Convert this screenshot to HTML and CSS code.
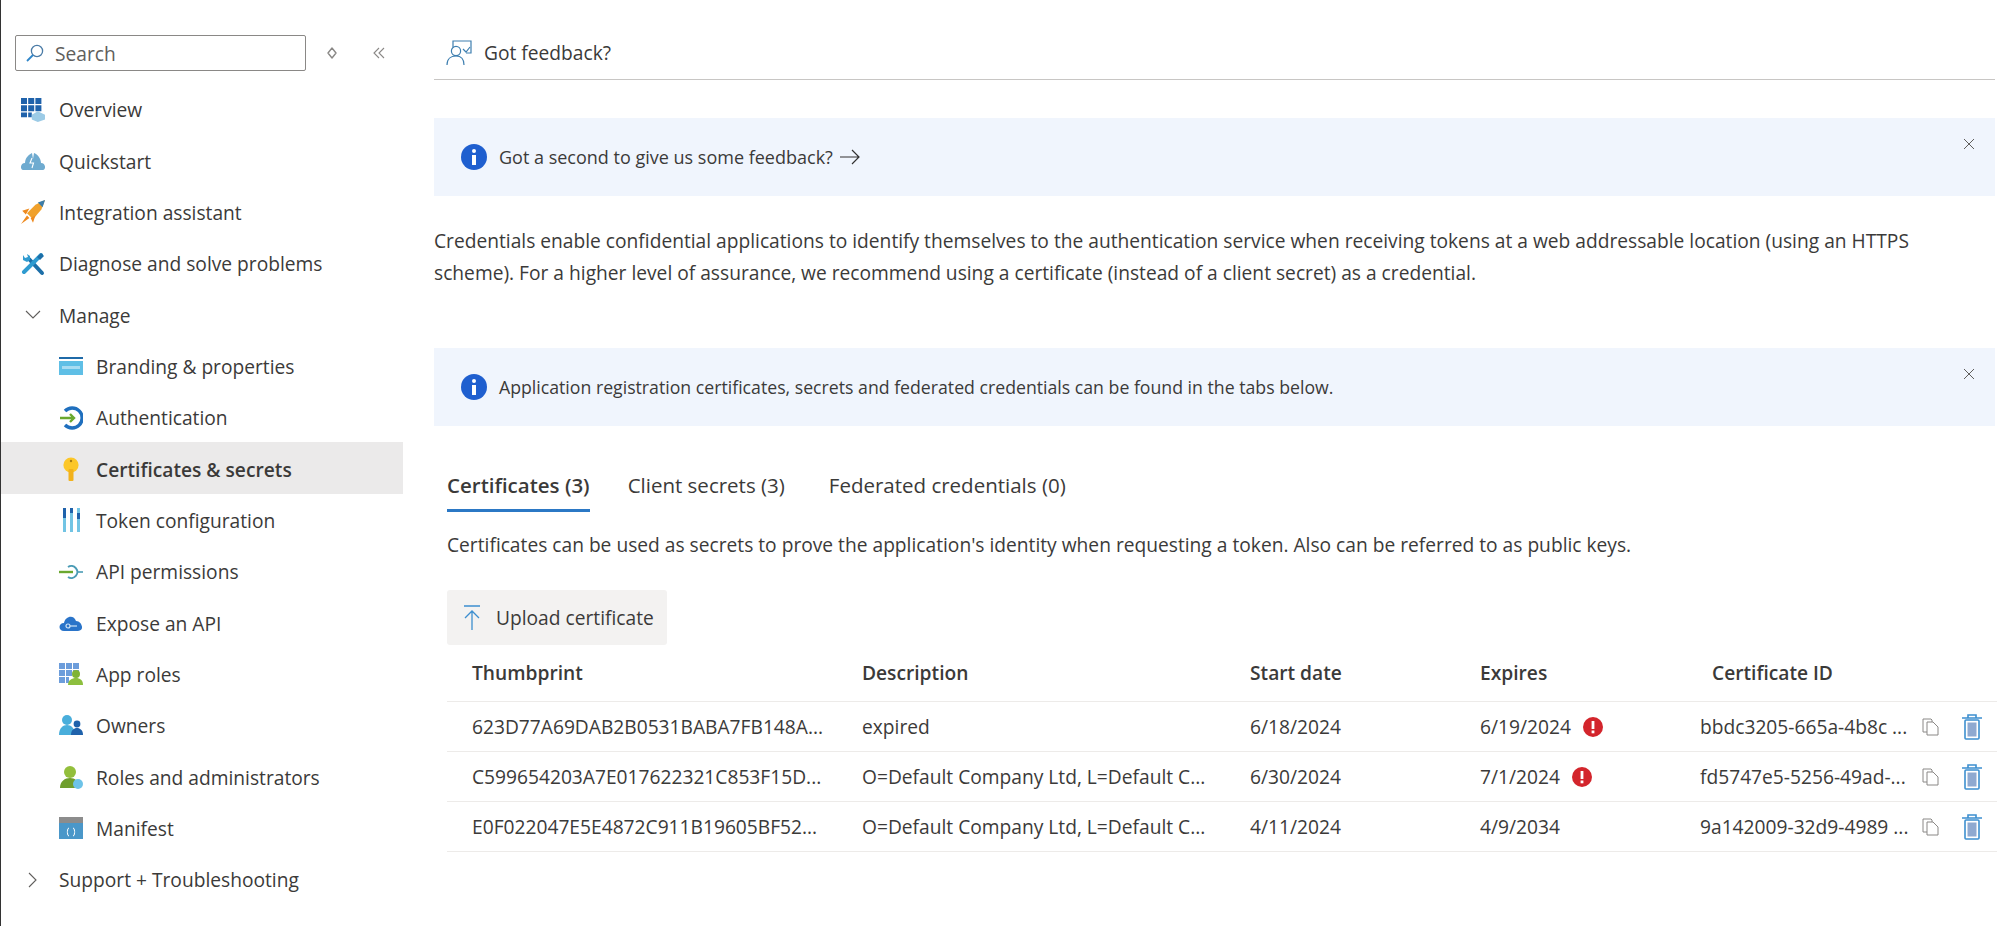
FILE: index.html
```html
<!DOCTYPE html>
<html lang="en">
<head>
  <meta charset="UTF-8">
  <title>Certificates &amp; secrets</title>
  <link rel="stylesheet" href="styles.css">
</head>
<body>
  <div class="page">
    <nav class="sidebar">
      <div class="search-row">
        <div class="search-box">
          <svg class="search-icon" viewBox="0 0 20 20"><circle cx="12" cy="8" r="5.6" fill="none" stroke="#4a7ba6" stroke-width="1.3"/><path d="M8 12L2 18" stroke="#2f86c9" stroke-width="1.8"/></svg>
          <span>Search</span>
        </div>
        <svg class="tool-icon" viewBox="0 0 12 14"><path d="M6 2L10 7L6 12L2 7Z" fill="none" stroke="#8a8886" stroke-width="1.4" stroke-linejoin="round"/></svg>
        <svg class="tool-icon collapse" viewBox="0 0 14 14"><path d="M7 2L2 7L7 12M12 2L7 7L12 12" fill="none" stroke="#8a8886" stroke-width="1.1"/></svg>
      </div>

      <a class="nav-item">
        <svg class="nav-icon" viewBox="0 0 20 20"><path d="M0 0H5V5H0ZM6 0H11V5H6ZM12 0H17V5H12ZM0 6H5V11H0ZM6 6H11V11H6ZM12 6H17V11H12ZM0 12H5V16H0ZM6 12H9V16H6Z" fill="#1f62ab"/><path d="M14 11L20 14V18L14 20L9 18V14Z" fill="#9ccbe6"/></svg>
        Overview
      </a>
      <a class="nav-item">
        <svg class="nav-icon" viewBox="0 0 24 24"><path d="M2 21C-1 21 -1 14 4 14C4 8 9 5 11 4L12 10L13 4C16 5 20 9 20 14C25 14 25 21 22 21Z" fill="#6fabd0"/><path d="M11 9L9 14H12.5L11 19" fill="none" stroke="#fff" stroke-width="1.1"/></svg>
        Quickstart
      </a>
      <a class="nav-item">
        <svg class="nav-icon" viewBox="0 0 20 20"><path d="M20 0L17 8L10 16L5 11L12 4Z" fill="#f0a12c"/><path d="M20 0L14 2L18 6Z" fill="#3c7da8"/><path d="M7 7L1 9L4 12ZM12 13L10 19L8 15ZM5 13L7 15L0 20Z" fill="#ee8a1f"/></svg>
        Integration assistant
      </a>
      <a class="nav-item">
        <svg class="nav-icon" viewBox="0 0 24 24"><path d="M8 7L21 21" stroke="#1d6fa8" stroke-width="4" stroke-linecap="round"/><path d="M20 3L3 20" stroke="#2f9bd0" stroke-width="4" stroke-linecap="round"/><path d="M20 1L23 4L19 8L16 5Z" fill="#1d6fa8"/><path d="M2 3L4 6L7 5L6 2L9 4L9 8L6 10L2 8Z" fill="#2f9bd0"/></svg>
        Diagnose and solve problems
      </a>
      <a class="nav-item">
        <svg class="nav-icon chevron" viewBox="0 0 16 16"><path d="M1 4L8 11L15 4" fill="none" stroke="#605e5c" stroke-width="1.1"/></svg>
        Manage
      </a>

      <a class="nav-item sub">
        <svg class="nav-icon" viewBox="0 0 24 20"><rect y="1" width="24" height="18" fill="#5fbfe6"/><rect y="1" width="24" height="2" fill="#1f6aa8"/><rect y="3" width="24" height="2" fill="#fff"/><rect x="3" y="10" width="18" height="3" fill="#a8dcf2"/></svg>
        Branding &amp; properties
      </a>
      <a class="nav-item sub">
        <svg class="nav-icon" viewBox="0 0 24 24"><path d="M6 5A10 10 0 1 1 6 19" fill="none" stroke="#1f6fbe" stroke-width="3.4"/><path d="M1 12H15M11 8L15 12L11 16" fill="none" stroke="#6aa82f" stroke-width="2.4"/></svg>
        Authentication
      </a>
      <a class="nav-item sub active">
        <svg class="nav-icon" viewBox="0 0 24 24"><circle cx="12" cy="8" r="7.6" fill="#fcc729"/><rect x="9.5" y="12" width="5" height="12" rx="1" fill="#f2b21c"/><circle cx="12" cy="4" r="1.2" fill="#a87c13"/></svg>
        Certificates &amp; secrets
      </a>
      <a class="nav-item sub">
        <svg class="nav-icon" viewBox="0 0 24 24"><path d="M4 0H7V24H4ZM11 0H14V24H11ZM18 0H21V24H18Z" fill="#72c4e4"/><path d="M4 0H7V10H4ZM11 0H14V5H11ZM18 5H21V11H18Z" fill="#1f62ab"/></svg>
        Token configuration
      </a>
      <a class="nav-item sub">
        <svg class="nav-icon" viewBox="0 0 24 24"><path d="M9 7A6 6 0 1 1 9 17" fill="none" stroke="#4a9bb5" stroke-width="2"/><path d="M19 12H24" stroke="#4a9bb5" stroke-width="1.6"/><path d="M0 12H14" stroke="#6aa82f" stroke-width="2.4"/></svg>
        API permissions
      </a>
      <a class="nav-item sub">
        <svg class="nav-icon" viewBox="0 0 24 20"><path d="M5 18C-1 18 -1 10 5 10C6 3 15 1 17 8C23 8 26 18 19 18Z" fill="#2a74c9"/><circle cx="9" cy="13" r="2" fill="none" stroke="#cfe4f7" stroke-width="1.2"/><path d="M11 13H18" stroke="#cfe4f7" stroke-width="1.2"/></svg>
        Expose an API
      </a>
      <a class="nav-item sub">
        <svg class="nav-icon" viewBox="0 0 24 24"><path d="M0 1H6V7H0ZM7 1H13V7H7ZM14 1H20V7H14ZM0 8H6V14H0ZM7 8H13V14H7ZM14 8H20V10H14ZM0 15H6V21H0ZM7 15H10V21H7Z" fill="#6c9ddb"/><circle cx="17" cy="12" r="4" fill="#7fb335"/><path d="M9 23C9 18 13 16 17 16C21 16 24 18 24 23Z" fill="#8dbf3e"/></svg>
        App roles
      </a>
      <a class="nav-item sub">
        <svg class="nav-icon" viewBox="0 0 24 24"><circle cx="8" cy="6" r="5" fill="#49aedb"/><path d="M0 21C0 14 4 11 8 11C12 11 16 14 16 21Z" fill="#49aedb"/><circle cx="18" cy="10" r="3.4" fill="#1f62ab"/><path d="M12 21C12 16 15 14 18 14C21 14 24 16 24 21Z" fill="#1f62ab"/></svg>
        Owners
      </a>
      <a class="nav-item sub">
        <svg class="nav-icon" viewBox="0 0 24 24"><circle cx="11" cy="7" r="6" fill="#93bf3c"/><path d="M1 23C1 16 6 13 11 13C16 13 20 16 20 23Z" fill="#6f9e2d"/><circle cx="19" cy="19" r="5" fill="#6dc3e8"/></svg>
        Roles and administrators
      </a>
      <a class="nav-item sub">
        <svg class="nav-icon" viewBox="0 0 24 24"><rect y="1" width="24" height="22" fill="#4a97c9"/><rect y="1" width="24" height="6" fill="#8c8c8c"/><path d="M10 12C8 12 9 16 8 16C9 16 8 20 10 20M14 12C16 12 15 16 16 16C15 16 16 20 14 20" fill="none" stroke="#fff" stroke-width="1"/></svg>
        Manifest
      </a>
      <a class="nav-item">
        <svg class="nav-icon chevron" viewBox="0 0 16 16"><path d="M4 1L11 8L4 15" fill="none" stroke="#605e5c" stroke-width="1.1"/></svg>
        Support + Troubleshooting
      </a>
    </nav>

    <main class="content">
      <div class="command-bar">
        <svg class="feedback-icon" viewBox="0 0 26 26"><path d="M7 7V1H25V13H20" fill="none" stroke="#3e7fb0" stroke-width="1.2"/><path d="M17 9L20 12L24 7" fill="none" stroke="#3e7fb0" stroke-width="1.2"/><circle cx="10" cy="11" r="4.6" fill="none" stroke="#3e7fb0" stroke-width="1.2"/><path d="M1 25C1 19 5 16 10 16C15 16 18 19 18 25" fill="none" stroke="#3e7fb0" stroke-width="1.2"/></svg>
        <span>Got feedback?</span>
      </div>

      <div class="banner first">
        <svg class="info-icon" viewBox="0 0 26 26"><circle cx="13" cy="13" r="13" fill="#1f5fcf"/><circle cx="13" cy="7" r="2" fill="#fff"/><rect x="11" y="11" width="4" height="10" fill="#fff"/></svg>
        <span>Got a second to give us some feedback?</span>
        <svg class="arrow-icon" viewBox="0 0 22 16"><path d="M1 8H20M13 1L20 8L13 15" fill="none" stroke="#323130" stroke-width="1.2"/></svg>
        <svg class="close-icon" viewBox="0 0 12 12"><path d="M1 1L11 11M11 1L1 11" stroke="#605e5c" stroke-width="1"/></svg>
      </div>

      <p class="intro">Credentials enable confidential applications to identify themselves to the authentication service when receiving tokens at a web addressable location (using an HTTPS scheme). For a higher level of assurance, we recommend using a certificate (instead of a client secret) as a credential.</p>

      <div class="banner small">
        <svg class="info-icon" viewBox="0 0 26 26"><circle cx="13" cy="13" r="13" fill="#1f5fcf"/><circle cx="13" cy="7" r="2" fill="#fff"/><rect x="11" y="11" width="4" height="10" fill="#fff"/></svg>
        <span>Application registration certificates, secrets and federated credentials can be found in the tabs below.</span>
        <svg class="close-icon" viewBox="0 0 12 12"><path d="M1 1L11 11M11 1L1 11" stroke="#605e5c" stroke-width="1"/></svg>
      </div>

      <section class="panel">
        <div class="tabs">
          <a class="tab selected">Certificates (3)</a>
          <a class="tab">Client secrets (3)</a>
          <a class="tab federated">Federated credentials (0)</a>
        </div>
        <p class="tab-note">Certificates can be used as secrets to prove the application's identity when requesting a token. Also can be referred to as public keys.</p>

        <button class="upload-btn">
          <svg viewBox="0 0 18 26"><path d="M1 1H17M9 6V25M2 13L9 6L16 13" fill="none" stroke="#3d8fcf" stroke-width="1.3"/></svg>
          Upload certificate
        </button>

        <div class="cert-table">
          <div class="cert-row head">
            <div>Thumbprint</div>
            <div>Description</div>
            <div>Start date</div>
            <div>Expires</div>
            <div class="id-head">Certificate ID</div>
          </div>
          <div class="cert-row">
            <div>623D77A69DAB2B0531BABA7FB148A...</div>
            <div>expired</div>
            <div>6/18/2024</div>
            <div class="expires">6/19/2024 <svg class="alert" viewBox="0 0 20 20"><circle cx="10" cy="10" r="10" fill="#d3252c"/><rect x="8.6" y="4" width="2.8" height="8" fill="#fff"/><rect x="8.6" y="13.5" width="2.8" height="2.8" fill="#fff"/></svg></div>
            <div class="cert-id"><span>bbdc3205-665a-4b8c ...</span><svg class="copy" viewBox="0 0 18 18"><path d="M1 1H9L10 2V14H1Z" fill="#fff" stroke="#8a8886"/><path d="M5 4H11L16 9V17H5Z" fill="#fff" stroke="#8a8886"/></svg><svg class="trash" viewBox="0 0 20 26"><rect x="3" y="6" width="14" height="19" rx="1" fill="#fff" stroke="#3d8fcf" stroke-width="1.6"/><rect x="5.5" y="8.5" width="9" height="14" fill="#8fa9d0"/><path d="M0 4H20M6 4V1H14V4" fill="none" stroke="#3d8fcf" stroke-width="1.6"/></svg></div>
          </div>
          <div class="cert-row">
            <div>C599654203A7E017622321C853F15D...</div>
            <div>O=Default Company Ltd, L=Default C...</div>
            <div>6/30/2024</div>
            <div class="expires">7/1/2024 <svg class="alert" viewBox="0 0 20 20"><circle cx="10" cy="10" r="10" fill="#d3252c"/><rect x="8.6" y="4" width="2.8" height="8" fill="#fff"/><rect x="8.6" y="13.5" width="2.8" height="2.8" fill="#fff"/></svg></div>
            <div class="cert-id"><span>fd5747e5-5256-49ad-...</span><svg class="copy" viewBox="0 0 18 18"><path d="M1 1H9L10 2V14H1Z" fill="#fff" stroke="#8a8886"/><path d="M5 4H11L16 9V17H5Z" fill="#fff" stroke="#8a8886"/></svg><svg class="trash" viewBox="0 0 20 26"><rect x="3" y="6" width="14" height="19" rx="1" fill="#fff" stroke="#3d8fcf" stroke-width="1.6"/><rect x="5.5" y="8.5" width="9" height="14" fill="#8fa9d0"/><path d="M0 4H20M6 4V1H14V4" fill="none" stroke="#3d8fcf" stroke-width="1.6"/></svg></div>
          </div>
          <div class="cert-row">
            <div>E0F022047E5E4872C911B19605BF52...</div>
            <div>O=Default Company Ltd, L=Default C...</div>
            <div>4/11/2024</div>
            <div class="expires">4/9/2034</div>
            <div class="cert-id"><span>9a142009-32d9-4989 ...</span><svg class="copy" viewBox="0 0 18 18"><path d="M1 1H9L10 2V14H1Z" fill="#fff" stroke="#8a8886"/><path d="M5 4H11L16 9V17H5Z" fill="#fff" stroke="#8a8886"/></svg><svg class="trash" viewBox="0 0 20 26"><rect x="3" y="6" width="14" height="19" rx="1" fill="#fff" stroke="#3d8fcf" stroke-width="1.6"/><rect x="5.5" y="8.5" width="9" height="14" fill="#8fa9d0"/><path d="M0 4H20M6 4V1H14V4" fill="none" stroke="#3d8fcf" stroke-width="1.6"/></svg></div>
          </div>
        </div>
      </section>
    </main>
  </div>
</body>
</html>
```

FILE: styles.css
```css
html, body {
  margin: 0;
  height: 100%;
  background: #fff;
}
body {
  font-family: "Open Sans", "Noto Sans", sans-serif;
  font-size: 19.2px;
  color: #3b3a39;
  overflow: hidden;
}
.page {
  display: flex;
  height: 926px;
  border-left: 1px solid #333;
}

/* left menu */
.sidebar {
  width: 402px;
  flex: none;
  padding-top: 35px;
}
.search-row {
  display: flex;
  align-items: center;
  margin: 0 0 12px 14px;
}
.search-box {
  width: 291px;
  height: 36px;
  box-sizing: border-box;
  border: 1px solid #8a8886;
  border-radius: 2px;
  display: flex;
  align-items: center;
  gap: 10px;
  padding-left: 9px;
  color: #605e5c;
}
.search-icon {
  width: 20px;
  height: 20px;
}
.tool-icon {
  width: 12px;
  height: 14px;
  margin-left: 20px;
}
.tool-icon.collapse {
  width: 14px;
  margin-left: 34px;
}
.nav-item {
  display: flex;
  align-items: center;
  box-sizing: border-box;
  height: 51.35px;
  padding: 2px 0 0 20px;
  gap: 14px;
}
.nav-item.sub {
  padding-left: 58px;
  gap: 13px;
}
.nav-item.active {
  background: #ebeaea;
  font-weight: 600;
}
.nav-icon {
  width: 24px;
  height: 24px;
  flex: none;
}
.nav-icon.chevron {
  width: 16px;
  height: 16px;
  margin-left: 4px;
  margin-right: 4px;
}

/* main area */
.content {
  flex: 1;
  padding: 0 19px 0 31px;
  min-width: 0;
}
.command-bar {
  height: 80px;
  box-sizing: border-box;
  border-bottom: 1px solid #c8c6c4;
  display: flex;
  align-items: center;
  gap: 12px;
  padding: 26px 0 0 12px;
}
.feedback-icon {
  width: 26px;
  height: 26px;
}
.banner {
  position: relative;
  background: #f0f5fd;
  display: flex;
  align-items: center;
  padding-left: 27px;
  gap: 12px;
  height: 78px;
}
.banner.first {
  margin-top: 38px;
  font-size: 18px;
}
.banner.small {
  font-size: 17.7px;
}
.info-icon {
  width: 26px;
  height: 26px;
}
.arrow-icon {
  width: 22px;
  height: 16px;
  margin-left: -6px;
}
.close-icon {
  position: absolute;
  right: 20px;
  top: 20px;
  width: 12px;
  height: 12px;
}
.intro {
  margin: 29px 0 59px;
  padding-right: 40px;
  line-height: 32px;
}

/* tabs and certificates */
.panel {
  padding-left: 13px;
}
.tabs {
  display: flex;
  gap: 38px;
  margin-top: 40px;
  font-size: 20.5px;
}
.tab {
  height: 46px;
  line-height: 39px;
  box-sizing: border-box;
}
.tab.federated {
  margin-left: 6px;
}
.tab.selected {
  font-weight: 600;
  border-bottom: 3px solid #2b78c5;
}
.tab-note {
  margin: 18px 0 0;
  line-height: 30px;
}
.upload-btn {
  display: flex;
  align-items: center;
  gap: 15px;
  height: 55px;
  width: 220px;
  margin-top: 30px;
  padding: 0 0 0 16px;
  border: none;
  border-radius: 3px;
  background: #f3f2f1;
  font: inherit;
  color: inherit;
}
.upload-btn svg {
  width: 18px;
  height: 26px;
}
.cert-table {
  width: 1550px;
}
.cert-row {
  display: grid;
  grid-template-columns: 390px 388px 230px 220px 1fr;
  align-items: center;
  box-sizing: border-box;
  height: 50px;
  padding-left: 25px;
  border-bottom: 1px solid #edebe9;
}
.cert-row.head {
  height: 57px;
  padding-bottom: 2px;
  font-weight: 600;
}
.id-head {
  padding-left: 12px;
}
.expires {
  display: flex;
  align-items: center;
  gap: 12px;
}
.alert {
  width: 20px;
  height: 20px;
}
.cert-id {
  display: flex;
  align-items: center;
}
.cert-id span {
  width: 222px;
  white-space: nowrap;
}
.copy {
  width: 18px;
  height: 18px;
}
.trash {
  width: 20px;
  height: 26px;
  margin-left: 22px;
}
```
